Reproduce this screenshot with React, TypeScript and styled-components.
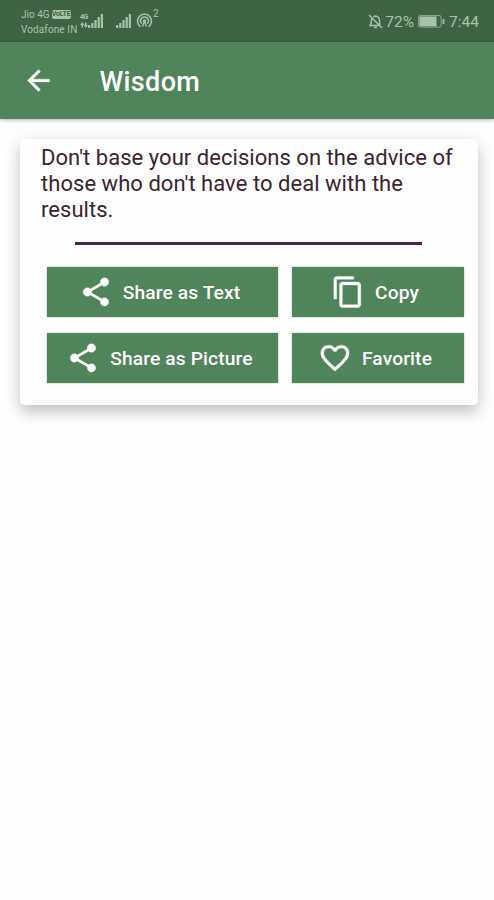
import React from "react";
import styled, { createGlobalStyle } from "styled-components";

const Global = createGlobalStyle`
  * { box-sizing: border-box; }
  body { margin: 0; background: #fefefe; font-family: Roboto, "Liberation Sans", sans-serif; }
`;

const Screen = styled.div`
  width: 494px;
  height: 900px;
  overflow: hidden;
  background: #fefefe;
`;

const StatusBar = styled.div`
  height: 42px;
  background: #3f6444;
  color: #a9c3ab;
  display: flex;
  justify-content: space-between;
  padding: 0 15px 0 21px;
`;

const StatusSide = styled.div`
  display: flex;
  align-items: flex-start;
`;

const Carriers = styled.div`
  width: 59px;
  padding-top: 7px;
  font-size: 10px;
  line-height: 15px;
  white-space: nowrap;
`;

const CarrierRow = styled.div<{ $spacing: number }>`
  display: flex;
  align-items: center;
  gap: 2px;
  height: 15px;
  letter-spacing: ${(p) => p.$spacing}px;
`;

const VolteTag = styled.span`
  width: 19px;
  height: 9px;
  border-radius: 2px;
  background: #a9c3ab;
  color: #3f6444;
  font-size: 7px;
  font-weight: 700;
  line-height: 9px;
  text-align: center;
  letter-spacing: -0.2px;
`;

const NetworkTag = styled.span`
  width: 9px;
  padding-top: 14px;
  font-size: 7px;
  line-height: 7px;
  font-weight: 700;
  letter-spacing: -0.5px;
`;

const DataArrows = styled.svg`
  display: block;
  margin-top: 1px;
`;

const StatusIcon = styled.svg<{ $top: number; $left?: number }>`
  display: block;
  flex: none;
  margin-top: ${(p) => p.$top}px;
  margin-left: ${(p) => p.$left ?? 0}px;
`;

const HotspotCount = styled.span`
  margin: 8px 0 0 0;
  font-size: 10px;
  line-height: 12px;
`;

const StatusText = styled.span<{ $left: number }>`
  margin-top: 12px;
  margin-left: ${(p) => p.$left}px;
  font-size: 15.5px;
  line-height: 20px;
`;

const AppBar = styled.header`
  height: 77px;
  background: #50845b;
  color: #fff;
  display: flex;
  align-items: center;
  padding-left: 22px;
  box-shadow: 0 1px 4px rgba(0, 0, 0, 0.3);
`;

const Title = styled.h1`
  margin: 3px 0 0 44.5px;
  font-size: 27px;
  font-weight: 500;
  line-height: 32px;
  letter-spacing: 0.35px;
`;

const Card = styled.main`
  width: 458px;
  height: 266px;
  margin: 20px 0 0 20px;
  padding: 6px 14px 0 27px;
  border-radius: 5px;
  background: #fefefe;
  box-shadow: 0 8px 14px rgba(0, 0, 0, 0.17), 0 3px 20px rgba(0, 0, 0, 0.09);
`;

const Quote = styled.p`
  margin: 0 0 0 -6px;
  width: 425px;
  height: 79px;
  color: #3b2430;
  font-size: 22px;
  line-height: 26px;
`;

const Line = styled.span`
  display: block;
  white-space: nowrap;
  letter-spacing: 0.04px;
`;

const Divider = styled.hr`
  width: 347px;
  height: 3px;
  border: 0;
  margin: 18px 0 22px 28px;
  background: #4d2740;
`;

const Actions = styled.div`
  display: grid;
  grid-template-columns: 231px 172px;
  grid-auto-rows: 50px;
  gap: 16px 14px;
`;

const ActionButton = styled.button`
  display: flex;
  align-items: center;
  justify-content: center;
  gap: 10px;
  padding: 0 6px 0 0;
  border: 0;
  background: #50845b;
  color: #fff;
  font: 500 19.2px/24px Roboto, "Liberation Sans", sans-serif;
  letter-spacing: 0.13px;
  white-space: nowrap;
  box-shadow: 0 0 2px rgba(50, 90, 60, 0.4);
`;

const ActionLabel = styled.span`
  padding-top: 1px;
`;

const Glyph = styled.svg`
  display: block;
  flex: none;
  fill: currentColor;
  stroke: currentColor;
  stroke-width: 0.25;
`;

const sharePath =
  "M18 16.08c-.76 0-1.44.3-1.96.77L8.91 12.7c.05-.23.09-.46.09-.7s-.04-.47-.09-.7l7.05-4.11c.54.5 1.25.81 2.04.81 1.66 0 3-1.34 3-3s-1.34-3-3-3-3 1.34-3 3c0 .24.04.47.09.7L8.04 9.81C7.5 9.31 6.79 9 6 9c-1.66 0-3 1.34-3 3s1.34 3 3 3c.79 0 1.5-.31 2.04-.81l7.12 4.16c-.05.21-.08.43-.08.65 0 1.61 1.31 2.92 2.92 2.92s2.92-1.31 2.92-2.92-1.31-2.92-2.92-2.92z";
const copyPath =
  "M16 1H4c-1.1 0-2 .9-2 2v14h2V3h12V1zm3 4H8c-1.1 0-2 .9-2 2v14c0 1.1.9 2 2 2h11c1.1 0 2-.9 2-2V7c0-1.1-.9-2-2-2zm0 16H8V7h11v14z";
const heartPath =
  "M16.5 3c-1.74 0-3.41.81-4.5 2.09C10.91 3.81 9.24 3 7.5 3 4.42 3 2 5.42 2 8.5c0 3.78 3.4 6.86 8.55 11.54L12 21.35l1.45-1.32C18.6 15.36 22 12.28 22 8.5 22 5.42 19.58 3 16.5 3zm-4.4 15.55l-.1.1-.1-.1C7.14 14.24 4 11.39 4 8.5 4 6.5 5.5 5 7.5 5c1.54 0 3.04.99 3.57 2.36h1.87C13.46 5.99 14.96 5 16.5 5c2 0 3.5 1.5 3.5 3.5 0 2.89-3.14 5.74-7.9 10.05z";

const actions = [
  { label: "Share as Text", path: sharePath },
  { label: "Copy", path: copyPath },
  { label: "Share as Picture", path: sharePath },
  { label: "Favorite", path: heartPath },
];

const Signal = ({ left }: { left: number }) => (
  <StatusIcon $top={14} $left={left} width="15" height="14" viewBox="0 0 15 14" fill="#a9c3ab">
    <rect x="0" y="11" width="2.2" height="3" />
    <rect x="3.2" y="9" width="2.2" height="5" />
    <rect x="6.4" y="6" width="2.2" height="8" />
    <rect x="9.6" y="3" width="2.2" height="11" />
    <rect x="12.8" y="0" width="2.2" height="14" />
  </StatusIcon>
);

export default function App() {
  return (
    <Screen>
      <Global />
      <StatusBar>
        <StatusSide>
          <Carriers>
            <CarrierRow $spacing={0}>
              Jio 4G <VolteTag>VoLTE</VolteTag>
            </CarrierRow>
            <CarrierRow $spacing={0.1}>Vodafone IN</CarrierRow>
          </Carriers>
          <NetworkTag>
            4G
            <DataArrows width="8" height="6" viewBox="0 0 8 6" fill="#a9c3ab">
              <path d="M0 3 2.2 0 4.4 3H3v2.500H1.500V3zM3.600 3H5V.5h1.500V3H8L5.800 6z" />
            </DataArrows>
          </NetworkTag>
          <Signal left={-1} />
          <Signal left={13} />
          <StatusIcon $top={13} $left={5} width="17" height="16" viewBox="0 0 17 16" fill="none" stroke="#a9c3ab" strokeWidth="1.5">
            <path d="M4.5 13.8a7 7 0 1 1 8 0M5.7 10.8a4 4 0 1 1 5.6 0" />
            <path d="M8.5 8 6.6 13.5M8.5 8l1.9 5.5" />
            <circle cx="8.5" cy="8" r="1" fill="#a9c3ab" />
          </StatusIcon>
          <HotspotCount>2</HotspotCount>
        </StatusSide>
        <StatusSide>
          <StatusIcon $top={14} width="15" height="15" viewBox="0 0 15 15" fill="none" stroke="#a9c3ab" strokeWidth="1.5">
            <path d="M1 1l13 13M4 4.3C3.2 5.4 3.2 6.5 3.2 9L2 11.5h9.5M5.3 2.9C8 1 11.5 3 11.5 6.2V9l.8 1.5M6 13.6h3" />
          </StatusIcon>
          <StatusText $left={2}>72%</StatusText>
          <StatusIcon $top={15} $left={4} width="27" height="13" viewBox="0 0 27 13" fill="none" stroke="#a9c3ab">
            <rect x=".6" y=".6" width="22.5" height="11.5" rx="1.5" strokeWidth="1" strokeOpacity=".75" />
            <rect x="1.5" y="1.5" width="17" height="9.8" fill="#a9c3ab" stroke="none" />
            <path d="M25.5 4v5" strokeWidth="1.8" />
          </StatusIcon>
          <StatusText $left={4}>7:44</StatusText>
        </StatusSide>
      </StatusBar>
      <AppBar>
        <Glyph width="33" height="33" viewBox="0 0 24 24">
          <path d="M20 11H7.83l5.59-5.59L12 4l-8 8 8 8 1.41-1.41L7.83 13H20v-2z" />
        </Glyph>
        <Title>Wisdom</Title>
      </AppBar>
      <Card>
        <Quote>
          <Line>Don't base your decisions on the advice of</Line>
          <Line>those who don't have to deal with the</Line>
          <Line>results.</Line>
        </Quote>
        <Divider />
        <Actions>
          {actions.map((a) => (
            <ActionButton key={a.label} type="button">
              <Glyph width="34" height="34" viewBox="0 0 24 24">
                <path d={a.path} />
              </Glyph>
              <ActionLabel>{a.label}</ActionLabel>
            </ActionButton>
          ))}
        </Actions>
      </Card>
    </Screen>
  );
}
